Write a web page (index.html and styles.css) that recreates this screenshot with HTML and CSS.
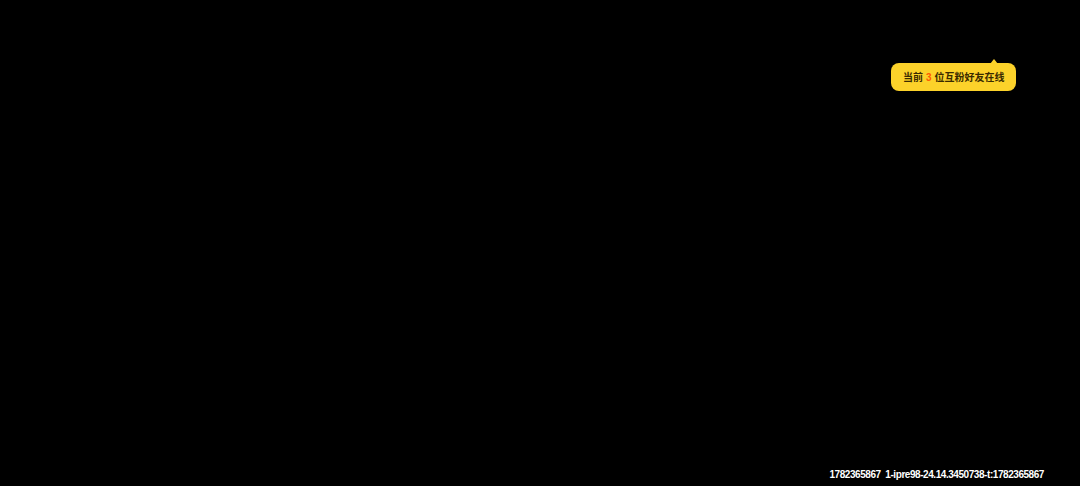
FILE: index.html
```html
<!DOCTYPE html>
<html lang="zh-CN">
<head>
<meta charset="utf-8">
<title>Live</title>
<link rel="stylesheet" href="styles.css">
</head>
<body>
<div class="stage">
  <div class="tip">当前<span class="num">3</span>位互粉好友在线</div>
  <div class="footer">1782365867&nbsp;&nbsp;1-ipre98-24.14.3450738-t:1782365867</div>
</div>
</body>
</html>
```

FILE: styles.css
```css
html, body {
  margin: 0;
  padding: 0;
  background: #000;
}
.stage {
  position: relative;
  width: 1080px;
  height: 486px;
  display: flex;
  flex-direction: column;
  background: #000;
}
.tip {
  position: absolute;
  left: 891px;
  top: 63px;
  width: 125px;
  height: 28px;
  box-sizing: border-box;
  padding-left: 12px;
  background: #fcd22a;
  border-radius: 8px;
  color: #3a2a00;
  font-family: "Noto Sans CJK SC", "Liberation Sans", sans-serif;
  font-weight: 700;
  font-size: 10px;
  line-height: 28px;
  white-space: nowrap;
}
.tip::before {
  content: "";
  position: absolute;
  left: 99px;
  top: -4px;
  width: 0;
  height: 0;
  border-left: 4px solid transparent;
  border-right: 4px solid transparent;
  border-bottom: 5px solid #fcd22a;
}
.num {
  color: #ff5a00;
  margin: 0 3px;
  font-family: "Liberation Sans", sans-serif;
}
.footer {
  margin-top: auto;
  align-self: flex-end;
  padding: 0 36px 5px 0;
  color: #fff;
  font-family: "Liberation Sans", Arial, sans-serif;
  font-weight: 700;
  font-size: 10px;
  letter-spacing: -0.44px;
  line-height: 12px;
  white-space: nowrap;
}
```
